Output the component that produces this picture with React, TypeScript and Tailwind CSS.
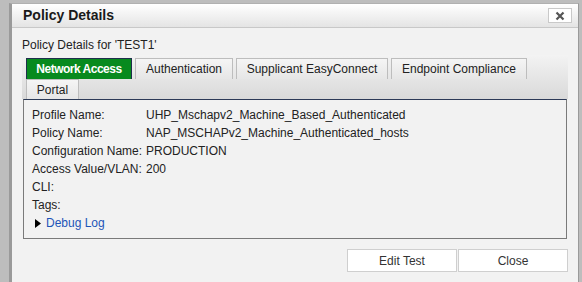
import React from "react";

const rows: [string, string][] = [
  ["Profile Name:", "UHP_Mschapv2_Machine_Based_Authenticated"],
  ["Policy Name:", "NAP_MSCHAPv2_Machine_Authenticated_hosts"],
  ["Configuration Name:", "PRODUCTION"],
  ["Access Value/VLAN:", "200"],
  ["CLI:", ""],
  ["Tags:", ""],
];

function Tab({ label, active, w, h }: { label: string; active?: boolean; w: string; h: string }) {
  return (
    <div
      className={
        active
          ? `${w} ${h} flex items-center justify-center border border-b-0 border-[#1f2f4d] bg-[#078a1e] text-white font-bold text-[12px] tracking-[-0.5px]`
          : `${w} ${h} flex items-center justify-center border border-b-0 border-[#bdbdbd] bg-gradient-to-b from-[#f5f5f5] to-[#e6e6e6] text-[#222] text-[12px]`
      }
    >
      {label}
    </div>
  );
}

export default function App() {
  return (
    <div className="w-[582px] h-[282px] overflow-hidden bg-[#bdbdbd] pt-[3px] pl-[9px] pr-[3px] font-['Liberation_Sans',Arial,sans-serif] text-[#222]">
      <div className="h-[290px] bg-[#f2f2f2] border-l-[3px] border-r border-[#9a9a9a] border-t border-t-[#b0b0b0] flex flex-col">
        <div className="h-[24px] shrink-0 flex items-center justify-between border-b border-[#c8c8c8] bg-gradient-to-b from-[#ffffff] to-[#e4e4e4] pl-[11px] pr-[6px]">
          <span className="text-[14px] font-bold text-[#1a1a1a]">Policy Details</span>
          <div className="w-[24px] h-[15px] bg-white border border-[#c9c9c9] flex items-center justify-center">
            <svg width="10" height="10" viewBox="0 0 10 10">
              <path d="M1.5 1.5 L8.5 8.5 M8.5 1.5 L1.5 8.5" stroke="#555" strokeWidth="2.2" />
            </svg>
          </div>
        </div>
        <div className="px-[10px] pt-[9px]">
          <div className="text-[12px] leading-[16px]">Policy Details for 'TEST1'</div>
          <div className="mt-[2px] bg-gradient-to-b from-[#f3f3f3] to-[#d9d9d9] pt-[3px] pl-[4px]">
            <div className="flex gap-[3px]">
              <Tab label="Network Access" active w="w-[106px]" h="h-[21px]" />
              <Tab label="Authentication" w="w-[98px]" h="h-[21px]" />
              <Tab label="Supplicant EasyConnect" w="w-[152px]" h="h-[21px]" />
              <Tab label="Endpoint Compliance" w="w-[136px]" h="h-[21px]" />
            </div>
            <div className="flex">
              <Tab label="Portal" w="w-[53px]" h="h-[20px]" />
            </div>
          </div>
          <div className="mx-[1px] h-[140px] border border-[#7a7a7a] border-t-[#2c3a57] bg-[#f2f2f2] pt-[6px] pl-[8px] text-[12px] leading-[18px]">
            {rows.map(([k, v]) => (
              <div key={k} className="grid grid-cols-[114px_1fr]">
                <span>{k}</span>
                <span>{v}</span>
              </div>
            ))}
            <div className="flex items-center">
              <svg width="6" height="9" viewBox="0 0 6 9" className="ml-[3px] mr-[5px]">
                <path d="M0 0 L6 4.5 L0 9 Z" fill="#000" />
              </svg>
              <span className="text-[#1d55b8]">Debug Log</span>
            </div>
          </div>
          <div className="mt-[10px] flex justify-end gap-[1px]">
            <button className="w-[110px] h-[23px] bg-white border border-[#cfcfcf] text-[12px] text-[#333]">Edit Test</button>
            <button className="w-[110px] h-[23px] bg-white border border-[#cfcfcf] text-[12px] text-[#333]">Close</button>
          </div>
        </div>
      </div>
    </div>
  );
}
